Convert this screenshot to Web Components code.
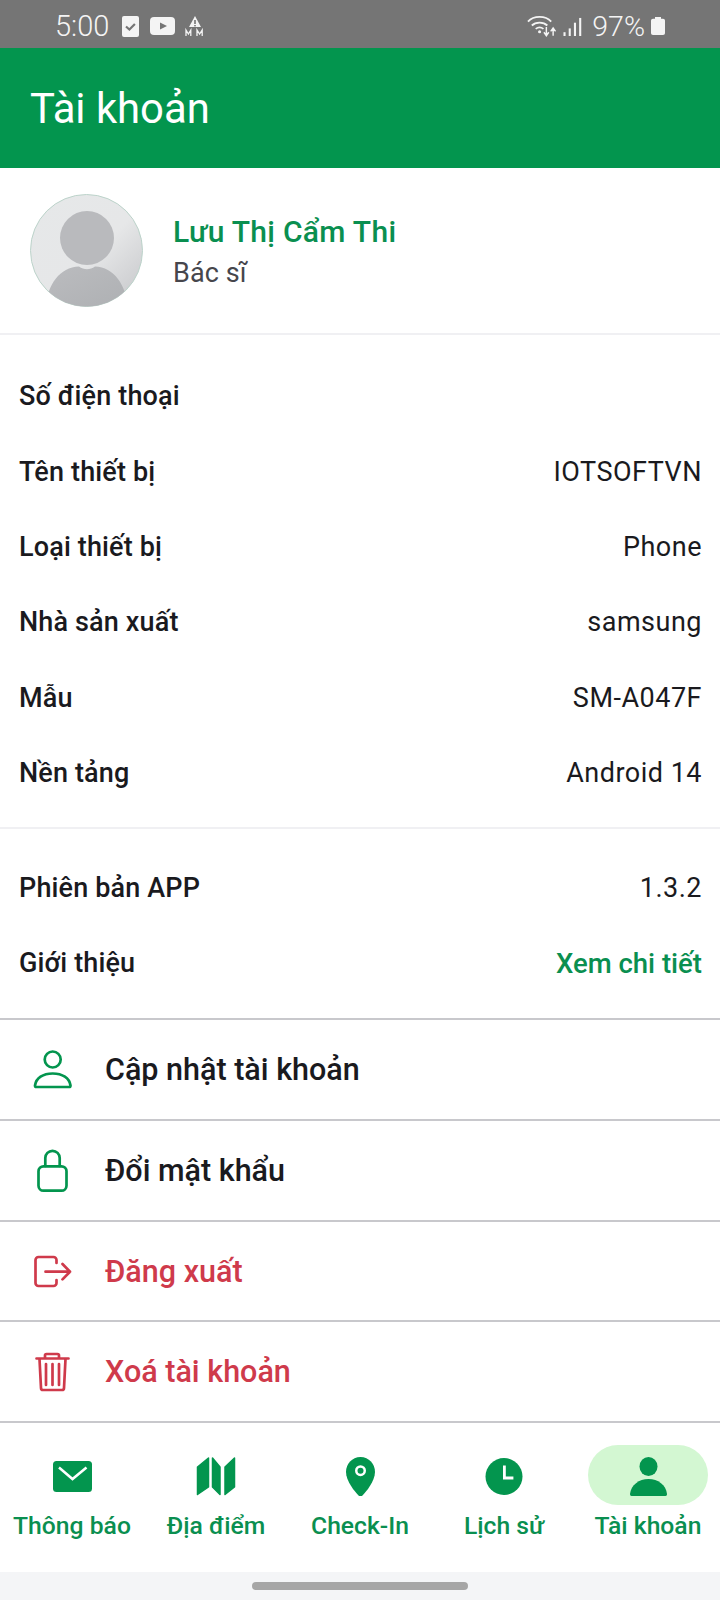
<!DOCTYPE html>
<html lang="vi">
<head>
<meta charset="utf-8">
<title>Tài khoản</title>
<style>
  html, body { margin: 0; padding: 0; background: #fff; }
  body { width: 720px; height: 1600px; display: flex; flex-direction: column; font-family: Roboto, "Noto Sans", sans-serif; overflow: hidden; }
</style>
</head>
<body>
<status-bar></status-bar>
<app-header>Tài khoản</app-header>
<profile-card name="Lưu Thị Cẩm Thi" role="Bác sĩ"></profile-card>
<info-list>
  <info-row label="Số điện thoại"></info-row>
  <info-row label="Tên thiết bị" value="IOTSOFTVN"></info-row>
  <info-row label="Loại thiết bị" value="Phone"></info-row>
  <info-row label="Nhà sản xuất" value="samsung"></info-row>
  <info-row label="Mẫu" value="SM-A047F"></info-row>
  <info-row label="Nền tảng" value="Android 14"></info-row>
</info-list>
<info-list class="second">
  <info-row label="Phiên bản APP" value="1.3.2"></info-row>
  <info-row label="Giới thiệu" value="Xem chi tiết" link></info-row>
</info-list>
<action-row icon="user" label="Cập nhật tài khoản"></action-row>
<action-row icon="lock" label="Đổi mật khẩu"></action-row>
<action-row icon="logout" label="Đăng xuất" danger></action-row>
<action-row icon="trash" label="Xoá tài khoản" danger></action-row>
<bottom-nav></bottom-nav>
<script>
class StatusBar extends HTMLElement {
  connectedCallback() {
    this.attachShadow({ mode: 'open' });
    this.shadowRoot.innerHTML = `
      <style>
        :host { display: flex; align-items: center; height: 48px; flex: none; background: #757575; color: #f4f4f4; font-family: Roboto, sans-serif; padding: 4px 55px 0; box-sizing: border-box; }
        .time { font-size: 29px; font-weight: 300; margin-right: 13px; }
        .pct { font-size: 28.5px; font-weight: 300; }
        .left, .right { display: flex; align-items: center; }
        .right { margin-left: auto; }
        svg { display: block; fill: #f4f4f4; }
      </style>
      <div class="left">
        <span class="time">5:00</span>
        <svg width="17" height="21" viewBox="0 0 17 21" style="margin-right:11px"><rect width="17" height="21" rx="2"/><path d="M4 10.500l3.400 3 5.500-5.500" fill="none" stroke="#757575" stroke-width="2.200"/></svg>
        <svg width="25" height="18" viewBox="0 0 25 18" style="margin-right:10px"><rect width="25" height="18" rx="4"/><path d="M10 5.500l7 3.500-7 3.500z" fill="#757575"/></svg>
        <svg width="20" height="22" viewBox="0 0 20 22"><path d="M10 1l6 11H4z"/><rect x="9.200" y="5" width="1.600" height="4" fill="#757575"/><rect x="9.200" y="10" width="1.600" height="1.400" fill="#757575"/><path d="M1 21v-6l2.400 4 2.400-4v6M12 21v-6l2.600 4 2.600-4v6" fill="none" stroke="#f4f4f4" stroke-width="1.300"/></svg>
      </div>
      <div class="right">
        <svg width="30" height="24" viewBox="0 0 31 24" style="margin-right:6px"><g fill="none" stroke="#f4f4f4" stroke-width="1.900"><path d="M1 7.500C7 1 19 1 25 7.500"/><path d="M5 11.500c4-4 12-4 16 0"/><path d="M9 15c2.500-2 5.500-2 8 0"/></g><circle cx="13" cy="18" r="1.600"/><path d="M20 13v8m-2.500-2.500L20 22l2.500-3.500M27 22v-7m-2.500 2.500L27 14l2.500 3.500" fill="none" stroke="#f4f4f4" stroke-width="1.500"/></svg>
        <svg width="19" height="19" viewBox="0 0 19 20" style="margin-right:10px"><rect x="0" y="16" width="2.200" height="4"/><rect x="5.500" y="12" width="2.200" height="8"/><rect x="11" y="6" width="2.200" height="14"/><rect x="16.500" y="1" width="2.200" height="19"/></svg>
        <span class="pct">97%</span>
        <svg width="14" height="18" viewBox="0 0 14 20" preserveAspectRatio="none" style="margin-left:6px"><path d="M4 0h6v2h2a2 2 0 0 1 2 2v14a2 2 0 0 1-2 2H2a2 2 0 0 1-2-2V4a2 2 0 0 1 2-2h2z"/></svg>
      </div>`;
  }
}
customElements.define('status-bar', StatusBar);

class AppHeader extends HTMLElement {
  connectedCallback() {
    this.attachShadow({ mode: 'open' });
    this.shadowRoot.innerHTML = `
      <style>
        :host { display: flex; align-items: center; flex: none; height: 120px; box-sizing: border-box; padding: 0 30px; background: #03954e; color: #fff; font-size: 41.800px; font-family: Roboto, sans-serif; }
      </style>
      <slot></slot>`;
  }
}
customElements.define('app-header', AppHeader);

class ProfileCard extends HTMLElement {
  connectedCallback() {
    this.attachShadow({ mode: 'open' });
    this.shadowRoot.innerHTML = `
      <style>
        :host { display: flex; align-items: center; flex: none; height: 167px; box-sizing: border-box; padding: 0 30px; gap: 30px; border-bottom: 2px solid #f0f0f3; font-family: Roboto, sans-serif; }
        svg { display: block; flex: none; }
        .text { margin-top: 4px; }
        .name { color: #0a8f50; font-size: 30px; font-weight: 500; line-height: 41px; letter-spacing: .3px; }
        .role { color: #46464c; font-size: 27px; line-height: 41px; margin-top: 1px; letter-spacing: .1px; }
      </style>
      <svg width="113" height="113" viewBox="0 0 113 113">
        <defs>
          <linearGradient id="bg" x1="0" y1="0" x2="1" y2="1"><stop offset="0" stop-color="#e6e8e9"/><stop offset=".55" stop-color="#e6e7e8"/><stop offset="1" stop-color="#c4c5c8"/></linearGradient>
          <linearGradient id="fg" x1="0" y1="0" x2="1" y2="1"><stop offset="0" stop-color="#bbbcbf"/><stop offset="1" stop-color="#aeb0b3"/></linearGradient>
          <clipPath id="c"><circle cx="56.500" cy="56.500" r="56"/></clipPath>
        </defs>
        <circle cx="56.500" cy="56.500" r="56" fill="url(#bg)" stroke="#bcd3ca" stroke-width="1"/>
        <g clip-path="url(#c)" fill="url(#fg)">
          <circle cx="57" cy="44" r="27" fill="#b9babd"/>
          <path d="M16 113c1-22 14-40 33-40.500 5 3.500 11 3.500 16 0C84 73 96 91 98 113z"/>
        </g>
      </svg>
      <div class="text">
        <div class="name">${this.getAttribute('name')}</div>
        <div class="role">${this.getAttribute('role')}</div>
      </div>`;
  }
}
customElements.define('profile-card', ProfileCard);

class InfoList extends HTMLElement {
  connectedCallback() {
    this.attachShadow({ mode: 'open' });
    const second = this.classList.contains('second');
    this.shadowRoot.innerHTML = `
      <style>
        :host { display: block; flex: none; box-sizing: border-box; padding: ${second ? '21px' : '23.500px'} 0 ${second ? '17px' : '16.500px'}; border-bottom: ${second ? '2px solid #c8c8cc' : '2px solid #f0f0f3'}; }
      </style>
      <slot></slot>`;
  }
}
customElements.define('info-list', InfoList);

class InfoRow extends HTMLElement {
  connectedCallback() {
    this.attachShadow({ mode: 'open' });
    const value = this.getAttribute('value') || '';
    this.shadowRoot.innerHTML = `
      <style>
        :host { display: flex; align-items: center; justify-content: space-between; height: 75.400px; padding: 0 18px 0 19px; font-family: Roboto, sans-serif; font-size: 27px; color: #1a1a1e; }
        .label { font-weight: 500; letter-spacing: .15px; }
        .value { font-weight: 400; letter-spacing: .5px; }
        :host([link]) .value { color: #0a8f50; font-weight: 500; font-size: 27.500px; letter-spacing: 0; }
      </style>
      <span class="label">${this.getAttribute('label')}</span>
      <span class="value">${value}</span>`;
  }
}
customElements.define('info-row', InfoRow);

const ACTION_ICONS = {
  user: '<circle cx="25.700" cy="15.500" r="8"/><path d="M9.500 43c-1 0-1.500-.5-1.500-1.500C9 34 16 29.500 25.700 29.500S42.500 34 43.500 41.500c0 1-.5 1.500-1.500 1.500z"/>',
  lock: '<rect x="11.500" y="22.300" width="28" height="24.400" rx="5"/><path d="M18.300 22v-8a7.200 7.200 0 0 1 14.400 0v8"/>',
  logout: '<path d="M29.500 18v-3a3 3 0 0 0-3-3H11.500a3 3 0 0 0-3 3v23a3 3 0 0 0 3 3h15a3 3 0 0 0 3-3v-3"/><path d="M18.500 26.700h24.500M35.500 19l7.500 7.700-7.500 7.700"/>',
  trash: '<path d="M9.500 12.500h32M18 12v-2.500a1.500 1.500 0 0 1 1.500-1.500h11a1.500 1.500 0 0 1 1.500 1.500V12M12.500 13l1.500 29a2 2 0 0 0 2 2h19a2 2 0 0 0 2-2l1.500-29M19 18v21M25.500 18v21M32 18v21"/>'
};

class ActionRow extends HTMLElement {
  connectedCallback() {
    this.attachShadow({ mode: 'open' });
    this.shadowRoot.innerHTML = `
      <style>
        :host { display: flex; align-items: center; flex: none; height: 100.750px; box-sizing: border-box; padding-left: 27px; border-bottom: 2px solid #c8c8cc; font-family: Roboto, sans-serif; font-size: 30.500px; font-weight: 500; color: #1a1a1e; gap: 26px; }
        :host([danger]) { color: #cf3a4b; }
        svg { display: block; flex: none; fill: none; stroke: #03954e; stroke-width: 2.700; stroke-linejoin: round; stroke-linecap: round; }
        :host([danger]) svg { stroke: #cf3a4b; }
      </style>
      <svg width="52" height="52" viewBox="0 0 52 52">${ACTION_ICONS[this.getAttribute('icon')]}</svg>
      <span>${this.getAttribute('label')}</span>`;
  }
}
customElements.define('action-row', ActionRow);

const NAV_ITEMS = [
  { label: 'Thông báo', icon: '<rect x="4" y="7" width="39" height="31" rx="3.500"/><path d="M10 13.500l13.500 11.500 14-11.500" fill="none" stroke="#fff" stroke-width="2.500"/>' },
  { label: 'Địa điểm', icon: '<g stroke="#03954e" stroke-width="1.500" stroke-linejoin="round"><path d="M4.500 13L15.500 4v29L4.500 40.500z"/><path d="M19.500 4L27 13v27.500L19.500 33z"/><path d="M32 13L41.500 4v29L32 40.500z"/></g>' },
  { label: 'Check-In', icon: '<path d="M23.500 3C15 3 9 10 9 18c0 9 9 20 12.500 23.500 1 1 3 1 4 0C29 38 38 27 38 18 38 10 32 3 23.500 3z"/><circle cx="23.500" cy="16.700" r="5.500" fill="#fff"/><circle cx="23.500" cy="16.700" r="3" fill="#03954e"/>' },
  { label: 'Lịch sử', icon: '<circle cx="23" cy="22.500" r="18.500"/><path d="M23.400 11.500v12.500h9" fill="none" stroke="#fff" stroke-width="2.800"/>' },
  { label: 'Tài khoản', icon: '<ellipse cx="23.500" cy="12.500" rx="9" ry="9.500"/><path d="M5 40c1-9 9-15 18.500-15S41 31 42 40c0 1-.5 2-1.500 2h-34c-1 0-1.500-1-1.500-2z"/>', active: true }
];

class BottomNav extends HTMLElement {
  connectedCallback() {
    this.attachShadow({ mode: 'open' });
    const items = NAV_ITEMS.map(i => `
      <div class="item ${i.active ? 'active' : ''}">
        <div class="pill"><svg width="46" height="42" viewBox="0 0 46 42">${i.icon}</svg></div>
        <div class="label">${i.label}</div>
      </div>`).join('');
    this.shadowRoot.innerHTML = `
      <style>
        :host { display: flex; flex-direction: column; flex: 1; background: #fff; font-family: Roboto, sans-serif; }
        .items { display: grid; grid-template-columns: repeat(5, 144px); height: 149px; box-sizing: border-box; padding-top: 22px; }
        .item { display: flex; flex-direction: column; align-items: center; }
        .pill { width: 120px; height: 60px; border-radius: 30px; display: flex; align-items: center; justify-content: center; }
        .active .pill { background: #d3f7d2; }
        svg { display: block; fill: #03954e; }
        .label { color: #0a8f50; font-size: 24.700px; font-weight: 500; margin-top: 6px; line-height: 30px; white-space: nowrap; }
        .home { flex: 1; background: #f4f5f7; display: flex; justify-content: center; align-items: center; }
        .home div { width: 216px; height: 8px; border-radius: 4px; background: #a6a6a6; }
      </style>
      <div class="items">${items}</div>
      <div class="home"><div></div></div>`;
  }
}
customElements.define('bottom-nav', BottomNav);
</script>
</body>
</html>
